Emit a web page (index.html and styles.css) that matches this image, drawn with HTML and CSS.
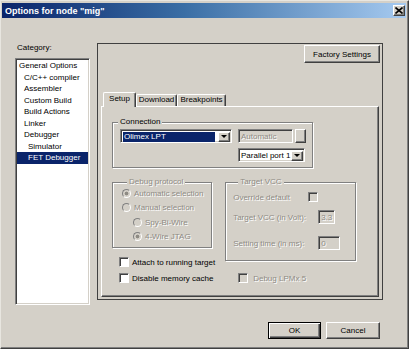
FILE: index.html
```html
<!DOCTYPE html>
<html>
<head>
    <title>Options for node "mig"</title>
    <link rel="stylesheet" href="styles.css">
</head>
<body>
    <div class="window">
        <div class="titlebar">
            <span class="title">Options for node "mig"</span>
            <span class="close">
                <svg width="8" height="7" viewBox="0 0 8 7">
                    <path d="M0.5 0.5 L7.5 6.5 M7.5 0.5 L0.5 6.5" stroke="#000" stroke-width="1.6" fill="none"/>
                </svg>
            </span>
        </div>

        <div class="main">
            <div class="category">
                <div class="cat-label">Category:</div>
                <ul class="cat-list">
                    <li>General Options</li>
                    <li class="l1">C/C++ compiler</li>
                    <li class="l1">Assembler</li>
                    <li class="l1">Custom Build</li>
                    <li class="l1">Build Actions</li>
                    <li class="l1">Linker</li>
                    <li class="l1">Debugger</li>
                    <li class="l2">Simulator</li>
                    <li class="l2 selected">FET Debugger</li>
                </ul>
            </div>

            <div class="panel">
                <div class="panel-top">
                    <button class="btn factory">Factory Settings</button>
                </div>
                <div class="tabs">
                    <div class="tab active">Setup</div>
                    <div class="tab">Download</div>
                    <div class="tab">Breakpoints</div>
                </div>
                <div class="tab-page">
                    <div class="group connection">
                        <div class="group-title">Connection</div>
                        <div class="conn-row">
                            <div class="combo olimex"><span class="combo-text selected">Olimex LPT</span><span class="drop"></span></div>
                            <div class="field disabled auto">Automatic</div>
                            <div class="btn dots"></div>
                        </div>
                        <div class="conn-row second">
                            <div class="combo parallel"><span class="combo-text">Parallel port 1</span><span class="drop"></span></div>
                        </div>
                    </div>

                    <div class="lower">
                        <div class="col-left">
                            <div class="group debug disabled">
                                <div class="group-title">Debug protocol</div>
                                <div class="radio-row first"><span class="radio checked"></span>Automatic selection</div>
                                <div class="radio-row"><span class="radio"></span>Manual selection</div>
                                <div class="radio-row indent gap"><span class="radio"></span>Spy-Bi-Wire</div>
                                <div class="radio-row indent"><span class="radio checked"></span>4-Wire JTAG</div>
                            </div>
                            <div class="check-row attach"><span class="checkbox"></span>Attach to running target</div>
                            <div class="check-row cache"><span class="checkbox"></span>Disable memory cache</div>
                        </div>

                        <div class="col-right">
                            <div class="group vcc disabled">
                                <div class="group-title">Target VCC</div>
                                <div class="vcc-row first">
                                    <span class="vcc-label">Override default</span>
                                    <span class="checkbox off"></span>
                                </div>
                                <div class="vcc-row second">
                                    <span class="vcc-label">Target VCC (in Volt):</span>
                                    <span class="field disabled volt">3.3</span>
                                </div>
                                <div class="vcc-row third">
                                    <span class="vcc-label">Setting time (in ms):</span>
                                    <span class="field disabled ms">0</span>
                                </div>
                            </div>
                            <div class="check-row lpm disabled"><span class="checkbox off"></span>Debug LPMx 5</div>
                        </div>
                    </div>
                </div>
            </div>
        </div>

        <div class="buttons">
            <button class="btn default">OK</button>
            <button class="btn cancel">Cancel</button>
        </div>
    </div>
</body>
</html>
```

FILE: styles.css
```css
* {
    box-sizing: border-box;
}

body {
    margin: 0;
    background-color: #fff;
    font-family: 'Liberation Sans', Arial, sans-serif;
    font-size: 8px;
    color: #000;
}

.window {
    width: 409px;
    height: 349px;
    background-color: #d4d0c8;
    border: 1px solid;
    border-color: #e8e6e0 #404040 #404040 #e8e6e0;
    box-shadow: inset -1px -1px 0 #808080;
    padding: 2px 2px 2px 1px;
    display: flex;
    flex-direction: column;
}

/* title bar */
.titlebar {
    height: 15px;
    background: linear-gradient(to right, #0a246a 0%, #3a6ea5 45%, #a6caf0 100%);
    display: flex;
    align-items: center;
    justify-content: space-between;
    padding: 0 1px 0 3px;
}

.title {
    color: #fff;
    font-weight: bold;
    font-size: 9px;
}

.close {
    width: 12px;
    height: 11px;
    background-color: #d4d0c8;
    border: 1px solid;
    border-color: #fff #404040 #404040 #fff;
    box-shadow: inset -1px -1px 0 #808080;
    display: flex;
    align-items: center;
    justify-content: center;
}

/* main area */
.main {
    display: flex;
    margin-top: 25px;
}

.category {
    margin-left: 13px;
    width: 75px;
}

.cat-label {
    line-height: 10px;
    height: 10px;
    padding-left: 2px;
}

.cat-list {
    list-style: none;
    margin: 5px 0 0;
    padding: 1px 0 0;
    height: 247px;
    background-color: #fff;
    border: 1px solid;
    border-color: #808080 #fff #fff #808080;
    box-shadow: inset 1px 1px 0 #404040, inset -1px -1px 0 #d4d0c8;
    overflow: hidden;
}

.cat-list li {
    line-height: 11.5px;
    height: 11.5px;
    margin: 0 1px;
    padding-left: 2px;
    white-space: nowrap;
}

.cat-list li.l1 {
    padding-left: 7px;
}

.cat-list li.l2 {
    padding-left: 11px;
}

.cat-list li.selected {
    background-color: #0a246a;
    color: #fff;
}

/* options panel */
.panel {
    margin-left: 7px;
    width: 286px;
    height: 257px;
    border: 1px solid #404040;
    padding: 0 0 2px;
    display: flex;
    flex-direction: column;
}

.panel-top {
    display: flex;
    justify-content: flex-end;
    padding: 1px 2px 0 0;
}

.btn {
    font-family: inherit;
    font-size: 8px;
    color: #000;
    background-color: #d4d0c8;
    border: 1px solid;
    border-color: #fff #404040 #404040 #fff;
    box-shadow: inset -1px -1px 0 #808080;
    padding: 0;
    margin: 0;
}

.factory {
    width: 76px;
    height: 18px;
}

.tabs {
    display: flex;
    align-items: flex-end;
    margin: 29px 0 0 5px;
    height: 14px;
    position: relative;
    z-index: 1;
}

.tab {
    height: 12px;
    line-height: 10px;
    padding: 0 1px;
    text-align: center;
    border: 1px solid;
    border-bottom: none;
    border-color: #fff #404040 #404040 #fff;
    box-shadow: inset -1px 0 0 #808080;
    border-radius: 2px 2px 0 0;
    background-color: #d4d0c8;
    white-space: nowrap;
}

.tab.active {
    height: 15px;
    margin-bottom: -1px;
    width: 33px;
    line-height: 12px;
}

.tab:nth-child(2) {
    width: 41px;
}

.tab:nth-child(3) {
    width: 49px;
}

.tab-page {
    flex: 1;
    margin: 0 3px;
    border: 1px solid;
    border-color: #fff #404040 #404040 #fff;
    box-shadow: inset -1px -1px 0 #808080;
}

/* group boxes */
.group {
    border: 1px solid #808080;
    box-shadow: 1px 1px 0 #fff, inset 1px 1px 0 #fff;
}

.group-title {
    width: fit-content;
    margin: -6px 0 0 5px;
    padding: 0 2px;
    line-height: 10px;
    height: 10px;
    background-color: #d4d0c8;
}

.disabled,
.disabled .group-title {
    color: #8e8b84;
    text-shadow: 1px 1px 0 #fff;
}

.connection {
    margin: 15px 0 0 10px;
    width: 201px;
    height: 46px;
}

.conn-row {
    display: flex;
    margin-top: 2px;
    padding-left: 7px;
}

.conn-row.second {
    margin-top: 5px;
    padding-left: 125px;
}

.combo {
    height: 14px;
    display: flex;
    align-items: center;
    background-color: #fff;
    border: 1px solid;
    border-color: #808080 #fff #fff #808080;
    box-shadow: inset 1px 1px 0 #404040, inset -1px -1px 0 #d4d0c8;
    padding: 2px 1px 1px 2px;
}

.olimex {
    width: 112px;
}

.parallel {
    width: 67px;
}

.combo-text {
    flex: 1;
    height: 10px;
    line-height: 10px;
    white-space: nowrap;
    overflow: hidden;
}

.combo-text.selected {
    background-color: #0a246a;
    color: #fff;
    padding-left: 1px;
    margin-right: 3px;
}

.drop {
    flex: none;
    width: 12px;
    height: 10px;
    background-color: #d4d0c8;
    border: 1px solid;
    border-color: #fff #404040 #404040 #fff;
    box-shadow: inset -1px -1px 0 #808080;
    display: flex;
    align-items: center;
    justify-content: center;
}

.drop::after {
    content: "";
    border-left: 3px solid transparent;
    border-right: 3px solid transparent;
    border-top: 3px solid #000;
}

.field {
    height: 14px;
    line-height: 10px;
    padding: 2px 2px 0;
    background-color: #d4d0c8;
    border: 1px solid;
    border-color: #808080 #fff #fff #808080;
    box-shadow: inset 1px 1px 0 #404040, inset -1px -1px 0 #d4d0c8;
    white-space: nowrap;
}

.auto {
    width: 55px;
    margin-left: 6px;
}

.dots {
    width: 11px;
    height: 14px;
    margin-left: 2px;
}

/* lower area */
.lower {
    display: flex;
    gap: 10px;
    margin: 14px 0 0 10px;
}

.debug {
    width: 100px;
    height: 66px;
    padding-left: 9px;
}

.radio-row {
    display: flex;
    align-items: center;
    height: 14px;
    white-space: nowrap;
}

.radio-row.first {
    margin-top: -1px;
}

.radio-row.gap {
    margin-top: 1px;
}

.radio-row.indent {
    margin-left: 11px;
}

.radio {
    width: 9px;
    height: 9px;
    margin-right: 3px;
    border-radius: 50%;
    border: 1px solid;
    border-color: #808080 #fff #fff #808080;
    background-color: #d4d0c8;
}

.radio.checked {
    background: radial-gradient(circle, #8e8b84 0 1.6px, #d4d0c8 2.2px);
}

.check-row {
    display: flex;
    align-items: center;
    height: 12px;
    white-space: nowrap;
}

.check-row.attach {
    margin: 8px 0 0 7px;
}

.check-row.cache {
    margin: 4px 0 0 7px;
}

.checkbox {
    width: 10px;
    height: 10px;
    margin-right: 3px;
    background-color: #fff;
    border: 1px solid;
    border-color: #808080 #fff #fff #808080;
    box-shadow: inset 1px 1px 0 #404040;
}

.checkbox.off {
    background-color: #d4d0c8;
}

.vcc {
    width: 131px;
    height: 79px;
    padding-left: 7px;
}

.vcc-row {
    display: flex;
    align-items: center;
    height: 14px;
    white-space: nowrap;
}

.vcc-row.first {
    margin-top: 3px;
}

.vcc-row.second {
    margin-top: 6px;
}

.vcc-row.third {
    margin-top: 12px;
}

.vcc-label {
    width: 75px;
}

.volt {
    width: 17px;
    margin-left: 10px;
}

.ms {
    width: 22px;
    margin-left: 10px;
}

.check-row.lpm {
    margin: 11px 0 0 13px;
}

.check-row.lpm .checkbox {
    margin-right: 5px;
}

/* dialog buttons */
.buttons {
    display: flex;
    justify-content: flex-end;
    gap: 5px;
    margin: 17px 26px 0 0;
}

.buttons .btn {
    height: 17px;
}

.default {
    width: 53px;
    border: 1px solid #000;
    box-shadow: inset 1px 1px 0 #fff, inset -1px -1px 0 #404040, inset -2px -2px 0 #808080;
}

.cancel {
    width: 54px;
}
```
